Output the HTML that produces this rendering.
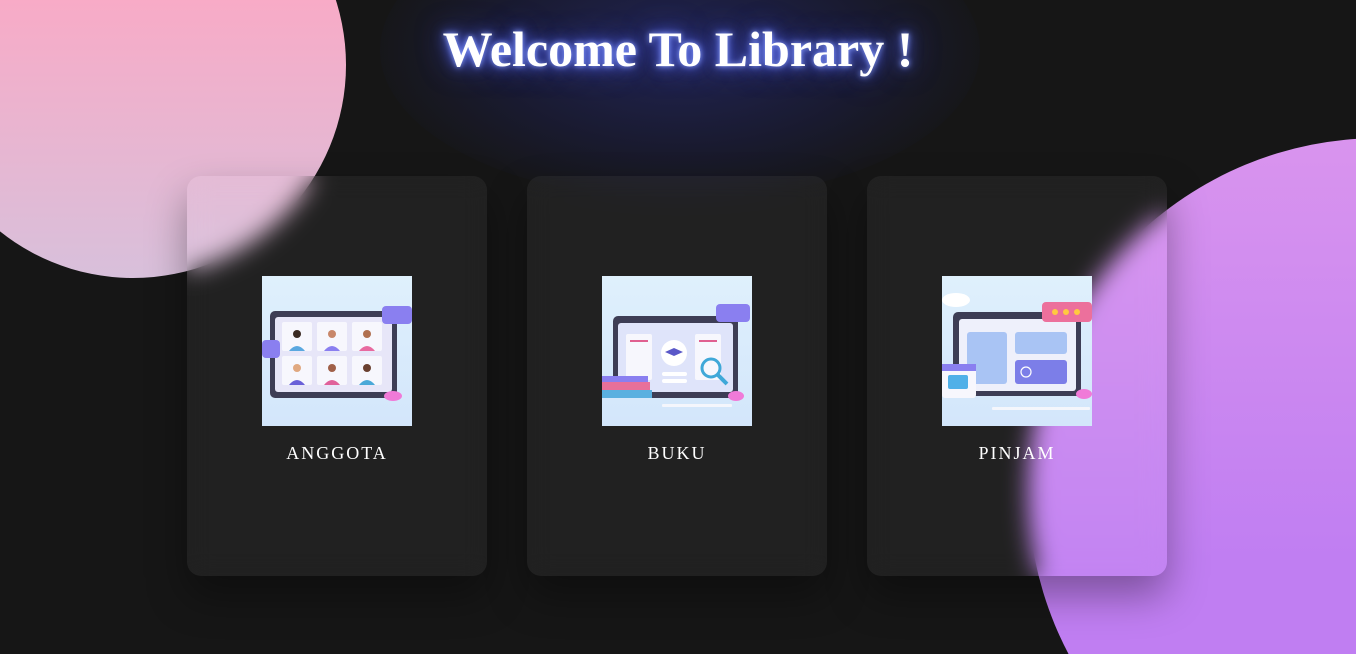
<!DOCTYPE html>
<html><head><meta charset="utf-8"><style>
*{margin:0;padding:0;box-sizing:border-box}
html,body{width:1356px;height:654px;overflow:hidden;background:#161616}
body{font-family:"Liberation Serif",serif}
#w{position:relative;width:1356px;height:654px;overflow:hidden}
.c1{position:absolute;left:-80px;top:-148px;width:426px;height:426px;border-radius:50%;background:linear-gradient(180deg,#ffa6c2 20%,#d8c0db 100%)}
.c2{position:absolute;left:1028px;top:138px;width:704px;height:704px;border-radius:50%;background:linear-gradient(180deg,#d994ee 0%,#c07ef2 60%)}
.glow{position:absolute;left:380px;top:-100px;width:600px;height:300px;border-radius:50%;background:radial-gradient(ellipse at center,rgba(36,40,100,.8) 0%,rgba(28,30,70,.55) 45%,rgba(22,22,30,0) 75%)}
h1{position:absolute;left:0;width:1356px;top:20px;text-align:center;font:bold 50px "Liberation Serif",serif;color:#fff;text-shadow:0 0 6px #8aa0ff,0 0 14px #5a6cff,0 0 30px #3a46c0}
.card{position:absolute;top:176px;width:300px;height:400px;border-radius:14px;background:rgba(255,255,255,.05);backdrop-filter:blur(12px);-webkit-backdrop-filter:blur(12px);box-shadow:0 20px 40px rgba(0,0,0,.35)}
.card svg{position:absolute;left:75px;top:100px;width:150px;height:150px}
.card span{position:absolute;left:0;width:300px;top:267px;text-align:center;color:#fff;font-size:18px;letter-spacing:2px}
</style></head><body><div id="w">
<div class="c1"></div><div class="c2"></div><div class="glow"></div>
<h1>Welcome To Library !</h1>

<div class="card" style="left:187px">
<svg viewBox="0 0 150 150"><defs><linearGradient id="bg" x1="0" y1="0" x2="0" y2="1"><stop offset="0" stop-color="#dff0fc"/><stop offset="1" stop-color="#d3e6fb"/></linearGradient></defs>
<rect width="150" height="150" fill="url(#bg)"/>
<rect x="8" y="35" width="127" height="87" rx="5" fill="#3d3d55"/>
<rect x="13" y="41" width="117" height="75" rx="3" fill="#e7e6f8"/>
<g fill="#f7f7fd"><rect x="20" y="46" width="30" height="29" rx="2"/><rect x="55" y="46" width="30" height="29" rx="2"/><rect x="90" y="46" width="30" height="29" rx="2"/><rect x="20" y="80" width="30" height="29" rx="2"/><rect x="55" y="80" width="30" height="29" rx="2"/><rect x="90" y="80" width="30" height="29" rx="2"/></g>
<g><circle cx="35" cy="58" r="4" fill="#3a2a22"/><path d="M27 75q8-10 16 0z" fill="#5aa8e0"/><circle cx="70" cy="58" r="4" fill="#c8876a"/><path d="M62 75q8-10 16 0z" fill="#8a7ff0"/><circle cx="105" cy="58" r="4" fill="#b07050"/><path d="M97 75q8-10 16 0z" fill="#e86aa0"/><circle cx="35" cy="92" r="4" fill="#e0a880"/><path d="M27 109q8-10 16 0z" fill="#6a60d8"/><circle cx="70" cy="92" r="4" fill="#a06048"/><path d="M62 109q8-10 16 0z" fill="#e0609a"/><circle cx="105" cy="92" r="4" fill="#6a4030"/><path d="M97 109q8-10 16 0z" fill="#4aa8d8"/></g>
<rect x="120" y="30" width="30" height="18" rx="4" fill="#8a7ff0"/><rect x="0" y="64" width="18" height="18" rx="4" fill="#8a7ff0"/>
<ellipse cx="131" cy="120" rx="9" ry="5" fill="#f07ad8"/>
</svg><span>ANGGOTA</span></div>

<div class="card" style="left:527px">
<svg viewBox="0 0 150 150"><rect width="150" height="150" fill="url(#bg)"/>
<rect x="11" y="40" width="125" height="82" rx="5" fill="#3d3d55"/>
<rect x="16" y="47" width="115" height="69" rx="3" fill="#dfe4fa"/>
<rect x="24" y="58" width="26" height="46" rx="2" fill="#f7f7fd"/><rect x="93" y="58" width="26" height="46" rx="2" fill="#f7f7fd"/>
<rect x="28" y="64" width="18" height="2" fill="#e06090"/><rect x="97" y="64" width="18" height="2" fill="#e06090"/>
<circle cx="72" cy="77" r="13" fill="#fff"/><path d="M63 76l9-4 9 4-9 4z" fill="#5a58c8"/>
<rect x="60" y="96" width="25" height="4" rx="2" fill="#fff"/><rect x="60" y="103" width="25" height="4" rx="2" fill="#fff"/>
<circle cx="109" cy="92" r="9" fill="none" stroke="#40a8d8" stroke-width="3"/><path d="M116 99l9 9" stroke="#40a8d8" stroke-width="4"/>
<rect x="114" y="28" width="34" height="18" rx="4" fill="#8a7ff0"/>
<rect x="0" y="100" width="46" height="6" fill="#8a7ff0"/><rect x="0" y="106" width="48" height="8" fill="#e8709a"/><rect x="0" y="114" width="50" height="8" fill="#5ab0e0"/>
<ellipse cx="134" cy="120" rx="8" ry="5" fill="#f07ad8"/>
<rect x="60" y="128" width="70" height="3" rx="1" fill="#f4f6fc"/>
</svg><span>BUKU</span></div>

<div class="card" style="left:867px">
<svg viewBox="0 0 150 150"><rect width="150" height="150" fill="url(#bg)"/>
<ellipse cx="14" cy="24" rx="14" ry="7" fill="#fff"/>
<rect x="11" y="36" width="128" height="84" rx="5" fill="#3d3d55"/>
<rect x="17" y="43" width="117" height="72" rx="3" fill="#eef0fb"/>
<rect x="25" y="56" width="40" height="52" rx="3" fill="#a9c4f4"/>
<rect x="73" y="56" width="52" height="22" rx="3" fill="#a9c4f4"/>
<rect x="73" y="84" width="52" height="24" rx="3" fill="#7c7ee8"/>
<circle cx="84" cy="96" r="5" fill="none" stroke="#fff" stroke-width="1.2"/>
<rect x="100" y="26" width="50" height="20" rx="4" fill="#ec709c"/>
<g fill="#ffc940"><circle cx="113" cy="36" r="3"/><circle cx="124" cy="36" r="3"/><circle cx="135" cy="36" r="3"/></g>
<rect x="0" y="88" width="34" height="34" rx="3" fill="#f7f7fd"/><rect x="0" y="88" width="34" height="7" fill="#8a7ff0"/>
<rect x="6" y="99" width="20" height="14" rx="2" fill="#50b0e8"/>
<ellipse cx="142" cy="118" rx="8" ry="5" fill="#f07ad8"/>
<rect x="50" y="131" width="98" height="3" rx="1" fill="#f4f6fc"/>
</svg><span>PINJAM</span></div>
</div></body></html>
